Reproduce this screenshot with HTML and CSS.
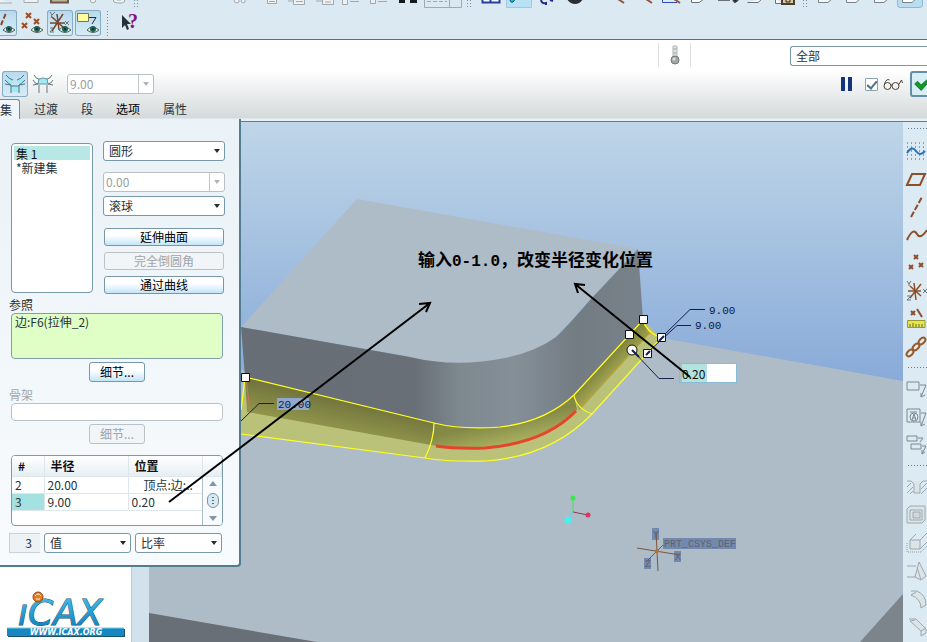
FILE: index.html
```html
<!DOCTYPE html>
<html lang="zh-CN">
<head>
<meta charset="utf-8">
<title>倒圆角</title>
<link rel="stylesheet" href="styles.css">
</head>
<body>
<header class="toolbar">
  <svg class="clipped-row" viewBox="0 0 927 9" preserveAspectRatio="xMinYMin slice" aria-hidden="true">
    <g fill="#eef1f2" stroke="#a1a9ae">
      <path d="M-3 -1V3H12M24 -1V2.500H38V-1"/>
      <path d="M51 -1V2.500H68V-1" fill="#bbb49a" stroke="#6b5a49" stroke-width="2"/>
      <path d="M90 -1Q90 3 93 3Q96 3 96 -1M113 -1Q113 3 117 3H122Q125 3 125 -1M117 0H121"/>
      <path d="M234 0Q234 3 237 3Q240 3 239 -1M241 -1Q241 3 243 3Q246 3 245 -1"/>
      <path d="M267.500 -1V3.500H276.500V-1M269 1.500H275M288 1H294M293.500 -1V4.500H304.500V-1M296 1.500H303"/>
      <path d="M316 1H322M322.500 -1V4.500H333.500V-1M325 2H331M342.500 -1V4.500H347.500V-1M350 1.500H359M370.500 -1V3.500H375.500V-1M378 1.500H387"/>
      <path d="M424.500 -1V7.500H461.500V-1M449.500 -1V7" fill="none"/><path d="M427 1.500H447" stroke-dasharray="4 2"/>
    </g>
    <path d="M399 -1V3H405V-1ZM410 -1V3H417V-1Z" fill="#14191c"/>
    <path d="M482.500 -1V2.500H499.500V-1M490.500 -1V2" fill="#fff" stroke="#243fa2" stroke-width="2"/>
    <path d="M506.500 -1V7.500H531.500V-1" fill="#b9e1f5" stroke="#a1c9dd"/>
    <path d="M510 -1Q510 3 513 2Q515 1 514 -1" fill="#21b6c6" stroke="#075469"/>
    <path d="M541 0Q542 4 546 3V5M550 0L553 1" fill="none" stroke="#232c84" stroke-width="2"/>
    <path d="M567 -1Q570 4 575 4Q580 4 583 -1Z" fill="#292f32"/>
    <path d="M618 -1L624 3M646 -1L652 3M674 -1L680 3" stroke="#90573a" stroke-width="2"/>
    <path d="M662.500 -1V2.500H677" fill="none" stroke="#314cac"/>
    <path d="M691.500 -1V2.500H699L704 -1M747.500 2.500H758L762 -1M775.500 -1V3.500H782" fill="#fff" stroke="#687177"/>
    <path d="M718 .5H730" stroke="#687177"/><path d="M733 0L735 2L738 0" stroke="#383f42" stroke-width="2"/>
    <path d="M782 -1V4H794V-1" fill="#d8ca9f" stroke="#4e3c31" stroke-width="2"/>
    <path d="M786 0V2H790V0" fill="none" stroke="#292520"/>
    <path d="M818.500 -1V2.500H828L832 -1M846.500 -1V2.500H856L860 -1M874.500 -1V2.500H884L888 -1" fill="#f5f8fa" stroke="#778389"/>
    <path d="M897.500 -1V5Q897.500 7.500 900 7.500H919Q922.500 7.500 922.500 5V-1" fill="#b9ddf1" stroke="#90b8d2"/>
    <path d="M902.500 -1V2.500H912L916 -1" fill="#fff" stroke="#778389"/>
    <path d="M134.500 0V8M137.500 0V8M467.500 0V8M470.500 0V8M803.500 0V8M806.500 0V8" stroke="#7693a4" stroke-dasharray="1 2"/>
  </svg>
  <div class="datum-row">
    <button class="icon-btn pressed edge" aria-label="显示轴"><svg viewBox="0 0 26 26"><path d="M10 15L15 3" stroke="#8d4a29" stroke-width="2" stroke-dasharray="5 2"/><use href="#eye"/></svg></button>
    <button class="icon-btn" aria-label="显示点"><svg viewBox="0 0 26 26"><path d="M7 3L12 8M12 3L7 8M3 13L8 18M8 13L3 18M15 9L20 14M20 9L15 14" stroke="#9a4d27" stroke-width="2"/><use href="#eye"/></svg></button>
    <button class="icon-btn pressed" aria-label="显示坐标系"><svg viewBox="0 0 26 26"><path d="M3 13H18M10 4L12 20M16 4L5 21M5 7L17 18" stroke="#75452e" stroke-width="1.500"/><path d="M3 2L5 5L8 2M5 5L4 8M18 11L22 15M22 11L18 15M3 18H6L3 22H7" fill="none" stroke="#66777f"/><use href="#eye"/></svg></button>
    <button class="icon-btn pressed" aria-label="显示注释"><svg viewBox="0 0 26 26"><path d="M2.500 3.500H13.500V11.500H2.500Z" fill="#fffb9f" stroke="#76794b"/><path d="M14 7.500H21L17 14" fill="none" stroke="#252b2e"/><use href="#eye"/></svg></button>
    <span class="grip-v"></span>
    <button class="icon-btn help" aria-label="帮助"><svg viewBox="0 0 26 26"><path d="M5 5V18L8 15L10 20L12 19L10 14H14Z" fill="#253139"/><text x="11" y="18" class="help-mark">?</text></svg></button>
  </div>
</header>

<svg class="defs" aria-hidden="true"><defs><g id="eye"><path d="M12 20Q17 14 24 20Q18 25 12 20Z" fill="#e0eeee" stroke="#52635c"/><circle cx="18" cy="19" r="3" fill="#235f55"/><circle cx="18" cy="19" r="1" fill="#082d28"/></g></defs></svg>

<section class="dashboard">
  <div class="message-row">
    <div class="thermo">
      <svg viewBox="0 0 12 20"><path d="M4 1H8V12H4Z" fill="#e0e2e2" stroke="#b5b8b8"/><path d="M4 4H8M4 8H8" stroke="#a8abab"/><circle cx="6" cy="15" r="4" fill="#a5a7a7" stroke="#737878"/><circle cx="5" cy="14" r="1.500" fill="#ddd"/></svg>
    </div>
    <select class="filter" aria-label="过滤器"><option>全部</option></select>
  </div>
  <div class="feature-row">
    <button class="icon-btn pressed round" aria-label="集模式"><svg viewBox="0 0 26 26"><path d="M5 6L11 10L9 13L5 11ZM21 6L15 10L17 13L21 11Z" fill="#9eebf3"/><path d="M9 15H17V21H9Z" fill="#9eebf3"/><path d="M4 4Q7 8 11 9M22 4Q19 8 15 9M3 9Q7 13 9 14V22M23 9Q19 13 17 14V22M3 13L9 14M23 13L17 14M9 15H17" fill="none" stroke="#4f7283"/></svg></button>
    <button class="icon-btn" aria-label="过渡模式"><svg viewBox="0 0 26 26"><path d="M9 8Q13 6 17 8L18 13H8Z" fill="#9eebf3" stroke="#68949d"/><path d="M4 4Q6 8 9 8M22 4Q20 8 17 8M3 9Q5 13 8 13M23 9Q21 13 18 13M3 14L8 13M23 14L18 13M9 14V22M17 14V22" fill="none" stroke="#66777f"/></svg></button>
    <span class="combo disabled radius"><select aria-label="半径" disabled><option>9.00</option></select></span>
    <div class="actions">
      <button class="pause" aria-label="暂停"></button>
      <label class="check"><input type="checkbox" checked aria-label="预览"><svg viewBox="0 0 20 14"><g fill="none" stroke="#514336"><circle cx="4" cy="9" r="3.500"/><circle cx="12" cy="9" r="3.500"/><path d="M1 7Q3 1 6 3M7.500 8H8.500M15 8L18 3L19 6"/></g></svg></label>
      <button class="accept" aria-label="确定"><svg viewBox="0 0 24 24"><path d="M3 12L6 9L10 13L19 5L20 8L10 19Z" fill="#15982a" stroke="#097119"/></svg></button>
    </div>
  </div>
  <nav class="tabs"><button class="tab active">集</button><button class="tab">过渡</button><button class="tab">段</button><button class="tab strong">选项</button><button class="tab">属性</button></nav>
</section>

<main class="workspace">
  <aside class="browser">
    <div class="logo">
      <svg viewBox="0 0 122 50" role="img" aria-label="iCAX">
        <defs><linearGradient id="blue" x2="0" y2="1"><stop stop-color="#4cc4ef"/><stop offset="1" stop-color="#0878b8"/></linearGradient></defs>
        <text x="14" y="34" class="logo-word">ıCAX</text>
        <circle cx="34" cy="6" r="5" fill="#e57d22" stroke="#8c4616"/><path d="M31 5Q34 1 37 5M32 8H36" stroke="#fff0cf" fill="none"/>
        <path d="M4 38H121V46H4Z" fill="#17536f"/><path d="M3 37H120V45H3Z" fill="#1687c0"/><path d="M3 37H120" stroke="#72cdec"/>
        <text x="62" y="44" class="logo-url" text-anchor="middle">WWW.ICAX.ORG</text>
      </svg>
    </div>
  </aside>

  <div class="viewport">
    <svg viewBox="149 122 754 520" preserveAspectRatio="xMinYMin slice" role="img" aria-label="模型">
      <defs>
        <linearGradient id="sky" gradientUnits="userSpaceOnUse" x1="0" y1="122" x2="0" y2="390"><stop stop-color="#bfd6e8"/><stop offset="1" stop-color="#87a9d8"/></linearGradient>
        <linearGradient id="side" gradientUnits="userSpaceOnUse" x1="241" y1="0" x2="645" y2="0"><stop stop-color="#686e75"/><stop offset=".43" stop-color="#696f76"/><stop offset=".54" stop-color="#7e888f"/><stop offset=".68" stop-color="#858f98"/><stop offset=".83" stop-color="#737c83"/><stop offset="1" stop-color="#78828a"/></linearGradient>
        <linearGradient id="olive" gradientUnits="userSpaceOnUse" x1="330" y1="394" x2="322" y2="432"><stop stop-color="#6e713c"/><stop offset="1" stop-color="#969b4c"/></linearGradient>
        <linearGradient id="olive-turn" gradientUnits="userSpaceOnUse" x1="500" y1="422" x2="506" y2="450"><stop stop-color="#848946"/><stop offset="1" stop-color="#b2b965"/></linearGradient>
        <linearGradient id="olive-end" gradientUnits="userSpaceOnUse" x1="604" y1="362" x2="618" y2="376"><stop stop-color="#80853e"/><stop offset="1" stop-color="#aaae58"/></linearGradient>
      </defs>
      <path d="M149 122H903V642H149Z" fill="url(#sky)"/>
      <path d="M149 370H246L640 334L903 381V642H149Z" fill="#aebcc7"/>
      <path d="M149 613L317 642H149Z" fill="#696f76"/>
      <path d="M903 594V642H860Z" fill="#7b858b"/>
      <path d="M241 327L357 199L638 249L590 300L553 340Q530 353 500 358Q448 368 410 357Z" fill="#aebcc7"/>
      <path d="M241 327L410 357Q456 368 505 358Q535 352 556 337Q566 328 590 300L638 249L643 320L574 395Q545 422 500 427Q462 430 434 423L245 377Z" fill="url(#side)"/>
      <path d="M245 377L434 423Q462 430 500 427Q545 422 574 395L643 320L661 338L592 414Q550 457 485 461Q450 462 425 458L241 434V410Z" fill="#bac27a"/>
      <path d="M245 377L434 423L431 445L247 412Z" fill="url(#olive)"/>
      <path d="M434 423Q462 430 500 427Q545 422 574 395L577 410Q540 443 485 448Q455 450 431 445Z" fill="url(#olive-turn)"/>
      <path d="M574 395L643 320L650 333L579 411Z" fill="url(#olive-end)"/>
      <path d="M581 406L650 333L646 331L661 338" fill="none" stroke="#c5a02d"/>
      <path d="M246 378L250 411" stroke="#c7795e"/>
      <g fill="none" stroke="#ffff20" stroke-width="1.200"><path d="M245 377L434 423Q462 430 500 427Q545 422 574 395L643 320Q646 332 661 338L592 414Q550 457 485 461Q450 462 425 458L241 434M245 378L241 410M434 423Q434 440 425 458M574 395Q576 408 592 414"/></g>
      <path d="M436 446Q455 449 485 448Q545 443 576 411" fill="none" stroke="#e6442c" stroke-width="3"/>
      <g fill="none" stroke="#161c4c"><path d="M241 421L259 403.500H274M661 338L690 309.500H705M648 352L677 325.500H691M634 352L659 378.500H674"/></g>
      <path d="M277 398H309V410H277Z" fill="#91a8cc"/>
      <g class="dimension"><text x="278" y="408">20.00</text><text x="709" y="314">9.00</text><text x="695" y="329">9.00</text></g>
      <g fill="#fff" stroke="#111"><path d="M241.500 373.500H249.500V381.500H241.500ZM639.500 315.500H647.500V323.500H639.500ZM625.500 330.500H633.500V338.500H625.500ZM657.500 333.500H665.500V341.500H657.500ZM643.500 349.500H651.500V357.500H643.500Z"/><circle cx="632" cy="350" r="5"/></g>
      <path d="M632 350L639 357M659 341L664 336M646 355L650 351" stroke="#161c4c" stroke-width="2"/>
      <path d="M573 512V499" stroke="#47dd5c"/><path d="M573 512L588 515" stroke="#9b3550"/><path d="M573 512L568 519" stroke="#49dce5"/>
      <circle cx="573" cy="498" r="2.500" fill="#36e94e"/><circle cx="588" cy="515" r="2.500" fill="#dc3659"/><circle cx="568" cy="520" r="3.500" fill="#45f1f3"/>
      <path d="M652 528H659V540H652ZM674 551H681V562H674ZM644 558H651V569H644ZM663 538H736V549H663Z" fill="#7189af"/>
      <path d="M637 548L680 555M656 532L658 571M646 562L663 545" stroke="#7d563b"/><circle cx="657" cy="551" r="2" fill="#b5702f"/>
      <g class="csys"><text x="664" y="547">PRT_CSYS_DEF</text><text x="653" y="538">Y</text><text x="675" y="560">X</text><text x="645" y="567">Z</text></g>
    </svg>
    <input class="ratio-input" aria-label="比率" value="0.20">
  </div>

  <aside class="feature-bar">
    <span class="grip-h"></span>
    <button aria-label="草绘"><svg viewBox="0 0 24 24"><path d="M4 4H24M4 8H24M4 12H24M4 16H24M4 20H24" stroke="#3b5774" stroke-dasharray="1 3"/><path d="M4 14Q9 6 13 12T22 12" fill="none" stroke="#2874bc" stroke-width="2"/></svg></button>
    <button aria-label="平面"><svg viewBox="0 0 24 24"><path d="M4 18L9 7H22L17 18Z" class="brown"/></svg></button>
    <button aria-label="轴"><svg viewBox="0 0 24 24"><path d="M8 22L19 2" class="brown" stroke-dasharray="6 2"/></svg></button>
    <button aria-label="曲线"><svg viewBox="0 0 24 24"><path d="M4 17Q10 4 14 11Q17 17 24 7" class="brown"/></svg></button>
    <button aria-label="点"><svg viewBox="0 0 24 24"><path d="M11 4L15 8M15 4L11 8M6 14L10 18M10 14L6 18M16 12L20 16M20 12L16 16" class="brown"/></svg></button>
    <button aria-label="坐标系"><svg viewBox="0 0 24 24"><path d="M5 12H18M11 4L13 21M18 5L7 19M7 7L18 17" class="brown mid"/><path d="M4 2L6 5L8 2M6 5V7M20 10L24 14M24 10L20 14M4 17H8L4 21H8" fill="none" stroke="#66737a"/></svg></button>
    <button aria-label="分析"><svg viewBox="0 0 24 24"><path d="M8 4L12 8M12 4L8 8M14 2L19 10" class="brown"/><path d="M4.500 13.500H22V20.500H4.500Z" fill="#e6e44f" stroke="#999833"/><path d="M7 20V17M10 20V16M13 20V17M16 20V17M19 20V17" stroke="#6a6934"/></svg></button>
    <button aria-label="参照"><svg viewBox="0 0 24 24"><g fill="none" stroke="#985a2c" stroke-width="2"><ellipse cx="7" cy="18" rx="4" ry="2.500" transform="rotate(-45 7 18)"/><ellipse cx="13" cy="12" rx="4" ry="2.500" transform="rotate(-45 13 12)"/><ellipse cx="19" cy="6" rx="4" ry="2.500" transform="rotate(-45 19 6)"/></g></svg></button>
    <span class="grip-h"></span>
    <button aria-label="注释"><svg viewBox="0 0 24 24"><path d="M4 5H16V13H4ZM17 8H23L18 20M18 16V20L22 18" class="gray"/></svg></button>
    <button aria-label="注释特征"><svg viewBox="0 0 24 24"><path d="M4 4H17V17H4ZM18 8H23L18 21M18 17V21L22 19M7 7H14" class="gray"/><circle cx="11" cy="12" r="4" class="gray"/><path d="M9 15L11 9L13 15M10 13H12" class="gray"/></svg></button>
    <button aria-label="传播"><svg viewBox="0 0 24 24"><path d="M4 3H14V8H4ZM8 11H18V16H8ZM15 5H20L17 9M19 13H23L19 21M19 17V21L22 19" class="gray"/></svg></button>
    <span class="grip-h"></span>
    <button aria-label="孔"><svg viewBox="0 0 24 24"><path d="M4 6H8L11 9V18H17V9L20 6H24" class="pale"/><path d="M4 12L8 8M4 18L10 12M7 19L10 16M18 14L24 8M18 19L24 13" class="pale"/></svg></button>
    <button aria-label="壳"><svg viewBox="0 0 24 24"><path d="M4 6L7 3H22V17L19 20H4ZM7 7H19V17H7Z" class="pale"/><path d="M10 9H17V15H10Z" fill="#d3d8da" stroke="#a1aaae"/></svg></button>
    <button aria-label="筋"><svg viewBox="0 0 24 24"><path d="M7 9H17V18H7ZM7 9L13 3M17 9L24 2M17 18L24 11" class="pale"/><path d="M4 12V21H18L24 15" fill="none" stroke="#929da3" stroke-dasharray="1 1"/></svg></button>
    <button aria-label="拔模"><svg viewBox="0 0 24 24"><path d="M4 7H13M4 18H12L16 3L23 17L18 21L12 18M18 21L14 8" class="pale"/></svg></button>
    <button aria-label="倒圆角"><svg viewBox="0 0 24 24"><path d="M8 4H14Q23 8 23 18L18 21Q18 12 8 8L13 5" class="pale"/></svg></button>
    <button aria-label="倒角"><svg viewBox="0 0 24 24"><path d="M6 4H13L23 14V18L18 21V16L7 6L12 5M18 16L23 13" class="pale"/></svg></button>
  </aside>

  <form class="panel">
    <div class="set-row">
      <select class="set-list" size="8" aria-label="集"><option selected>集 1</option><option>*新建集</option></select>
      <div class="shape-col">
        <span class="combo"><select aria-label="截面形状"><option>圆形</option></select></span>
        <span class="combo disabled conic"><select aria-label="圆锥参数" disabled><option>0.00</option></select></span>
        <span class="combo"><select aria-label="创建方法"><option>滚球</option></select></span>
        <div class="push-group">
          <button type="button" class="push">延伸曲面</button>
          <button type="button" class="push" disabled>完全倒圆角</button>
          <button type="button" class="push">通过曲线</button>
        </div>
      </div>
    </div>
    <label for="refs">参照</label>
    <textarea id="refs" class="refs">边:F6(拉伸_2)</textarea>
    <button type="button" class="push detail">细节...</button>
    <label for="spine" class="muted">骨架</label>
    <input id="spine" class="spine" disabled>
    <button type="button" class="push detail" disabled>细节...</button>
    <div class="radius-box">
      <table>
        <thead><tr><th class="num">#</th><th class="rad">半径</th><th>位置</th><th class="scroll-head"></th></tr></thead>
        <tbody>
          <tr><td>2</td><td>20.00</td><td class="vertex">顶点:边:..</td></tr>
          <tr><td class="current">3</td><td>9.00</td><td>0.20</td></tr>
        </tbody>
      </table>
      <div class="scroller" aria-hidden="true"><i class="up"></i><i class="thumb"></i><i class="down"></i></div>
    </div>
    <div class="value-row">
      <output>3</output>
      <span class="combo"><select aria-label="半径类型"><option>值</option></select></span>
      <span class="combo"><select aria-label="位置类型"><option>比率</option></select></span>
    </div>
  </form>

  <svg class="annotation" viewBox="0 122 927 520" preserveAspectRatio="xMinYMin slice">
    <g fill="none" stroke="#000" stroke-width="2"><path d="M169 502L430 303M419 304L430 303L426 312M690 377L575 284M585 285L575 284L578 293"/></g>
    <text x="418" y="266" class="note">输入<tspan class="note-num">0-1.0</tspan>，改变半径变化位置</text>
  </svg>
</main>
</body>
</html>
```
FILE: styles.css
```css
* { box-sizing: border-box; }
body {
  margin: 0; height: 100vh; overflow: hidden;
  display: flex; flex-direction: column;
  font: 12px/14px "Noto Sans CJK SC", sans-serif;
  color: #27343b; background: #dbe9f2;
}
button, input, select, textarea { font: inherit; color: inherit; margin: 0; padding: 0; border-radius: 3px; }
button { border: 0; background: none; }
svg { display: block; }
.defs { position: absolute; width: 0; height: 0; }

.toolbar { flex: none; height: 40px; overflow: hidden; background: #dbe9f2; border-bottom: 1px solid #4d7385; }
.clipped-row { width: 100%; height: 9px; }
.datum-row { display: flex; align-items: center; gap: 2px; margin-top: 1px; }
.icon-btn { flex: none; width: 26px; height: 26px; }
.icon-btn svg { width: 100%; height: 100%; fill: none; }
.pressed { background: linear-gradient(#b7d9ed, #d8edf7); box-shadow: inset 0 0 0 1px #86acc3; }
.edge { margin-left: -9px; }
.grip-v { width: 4px; height: 26px; margin: 0 3px; background: radial-gradient(circle, #6f8b9b 1px, transparent 1px) 0 0 / 3px 3px; }
.help { margin-left: 2px; }
.help-mark { font: bold 20px "Liberation Serif", serif; fill: #84137b; }

.dashboard { flex: none; height: 82px; display: flex; flex-direction: column; background: linear-gradient(#fff 30px, #d4dadb 78px, #e6f1f6 79px); border-bottom: 1px solid #5d7d90; }
.message-row { height: 30px; display: flex; justify-content: flex-end; }
.thermo { width: 33px; height: 24px; margin: 3px 99px 0 0; border: solid #dedede; border-width: 0 1px; display: flex; justify-content: center; align-items: center; }
.thermo svg { width: 12px; height: 20px; }
.filter { width: 137px; height: 20px; margin-top: 6px; padding-left: 5px; appearance: none; background: #fff; border: 1px solid #7898a7; border-right: 0; border-radius: 3px 0 0 3px; }
.feature-row { height: 28px; display: flex; align-items: center; gap: 4px; padding-left: 2px; }
.feature-row .icon-btn + .icon-btn { margin-left: -2px; }
.round { border-radius: 3px; }
.feature-row .radius { width: 87px; margin-left: 7px; }
.actions { margin-left: auto; display: flex; align-items: center; }
.pause { width: 11px; height: 14px; border: solid #12357e; border-width: 0 4px; border-radius: 0; margin-right: 13px; }
.check { display: flex; align-items: center; gap: 5px; margin-right: 6px; }
.check input { appearance: none; width: 13px; height: 13px; border: 1px solid #88a4b2; border-radius: 1px; background: #fff; display: grid; place-items: center; }
.check input::before { content: ""; width: 4px; height: 8px; border: solid #526f86; border-width: 0 2px 2px 0; transform: rotate(40deg); }
.check svg { width: 21px; height: 14px; }
.accept { width: 17px; height: 26px; overflow: hidden; border: 2px solid #658da6; border-right: 0; border-radius: 3px 0 0 3px; background: #d8eef7; }
.accept svg { width: 22px; height: 22px; }
.tabs { height: 20px; margin-top: 1px; display: flex; gap: 1px; }
.tab { height: 20px; padding: 0 11px; }
.active { padding: 0 7px 0 0; margin-right: 2px; background: #eff5f9; border: solid #778b97; border-width: 1px 1px 0 0; border-radius: 0 3px 0 0; }
.strong { color: #000; }

.workspace { flex: 1; min-height: 0; position: relative; display: flex; }
.browser { flex: none; width: 149px; padding-right: 18px; display: flex; align-items: flex-end; background: linear-gradient(90deg, #fff 131px, #9eb7c5 131px, #d2e2ec 132px); }
.logo { width: 122px; margin: 0 0 1px 4px; }
.logo svg { width: 100%; height: 50px; }
.logo-word { font: italic 36px "DejaVu Sans", sans-serif; fill: url(#blue); stroke: #16506f; stroke-width: 1px; paint-order: stroke; }
.logo-url { font: bold italic 8px "DejaVu Sans", sans-serif; fill: #fff; }
.viewport { flex: 1; min-width: 0; position: relative; overflow: hidden; background: #aebcc7; }
.viewport > svg { width: 100%; height: 100%; }
.dimension { font: 11px "Liberation Mono", monospace; fill: #11193f; }
.csys { font: 10px "Liberation Mono", monospace; fill: #68616a; }
.ratio-input { position: absolute; left: 530px; top: 241px; width: 58px; height: 20px; padding-left: 2px; color: #111; border: 1px solid #8abbd4; border-radius: 0; background: linear-gradient(90deg, #b2e3df 25px, #fff 25px) content-box #fff; }

.feature-bar { flex: none; width: 24px; overflow: hidden; display: flex; flex-direction: column; background: #dbeaf3; }
.feature-bar button { flex: none; height: 28px; width: 24px; }
.feature-bar svg { width: 24px; height: 24px; }
.grip-h { flex: none; height: 4px; margin: 5px 0 5px 4px; background: radial-gradient(circle, #607f92 1px, transparent 1px) 0 0 / 3px 3px; }
.grip-h:first-child { margin-bottom: 6px; }
.brown { fill: none; stroke: #8f4e2b; stroke-width: 2; }
.mid { stroke-width: 1.5; }
.gray { fill: none; stroke: #7d898f; }
.pale { fill: #dde4e7; stroke: #9ba8af; }

.panel { position: absolute; top: -3px; left: 0; width: 241px; padding: 22px 16px 12px 11px; display: flex; flex-direction: column; background: linear-gradient(#eaf2f7, #f8fbfd); border: solid #557b91; border-width: 0 2px 2px 0; border-radius: 0 0 4px 0; }
.set-row { display: flex; gap: 10px; }
.set-list { width: 82px; height: 150px; margin-top: 2px; padding: 2px; overflow: hidden; border: 1px solid #7698a8; border-radius: 4px; background: #fff; }
.set-list option { display: flex; align-items: center; height: 14px; min-height: 14px; padding: 0 2px; line-height: 14px; }
.set-list option:checked { background: linear-gradient(#b8e8e6, #b8e8e6); color: #111; }
.shape-col { flex: 1; margin-right: -2px; display: flex; flex-direction: column; gap: 4px; }
.conic { margin-top: 7px; }
.combo { position: relative; display: flex; }
.combo select { appearance: none; width: 100%; height: 20px; padding-left: 5px; border: 1px solid #7698a8; background: #fff; }
.combo::after { content: ""; position: absolute; right: 5px; top: 8px; border: solid transparent; border-width: 4px 3px 0; border-top-color: #222d33; }
.combo.disabled select { color: #999fa2; border-color: #b9bfc2; opacity: 1; padding-left: 2px; }
.combo.disabled::after { border-top-color: #afb4b7; }
.combo.disabled::before { content: ""; position: absolute; right: 15px; top: 1px; height: 18px; border-left: 1px solid #c1c7ca; }
.push-group { display: flex; flex-direction: column; gap: 6px; margin: 8px 1px 0; }
.push { height: 18px; line-height: 14px; color: #000; border: 1px solid #7698aa; background: linear-gradient(#fff 40%, #c4e5f7); }
.push:disabled { color: #9ea4a7; border-color: #bbc1c5; background: #f1f5f8; }
.panel label { margin: 4px 0 1px -2px; }
.panel .muted { color: #a1a7aa; margin-top: 6px; }
.refs { height: 46px; padding: 1px 3px; resize: none; border: 1px solid #829eaa; border-radius: 4px; background: #e0ffc7; }
.panel .detail { align-self: center; width: 56px; height: 20px; margin-top: 3px; }
.spine { height: 18px; border: 1px solid #bac3c7; border-radius: 4px; background: #fff; }
.radius-box { position: relative; height: 71px; margin: 11px 0 0; overflow: hidden; border: 1px solid #7c9ba9; border-radius: 4px; background: #fff; }
table { width: 100%; table-layout: fixed; border-collapse: collapse; }
th, td { padding: 0 3px; text-align: left; height: 17px; line-height: 16px; border: solid #dce7eb; border-width: 0 1px 1px 0; white-space: nowrap; }
th { height: 20px; padding: 0 6px; color: #111; background: linear-gradient(#fff, #e6eef3); }
.num { width: 32px; }
.rad { width: 84px; }
.scroll-head { width: 19px; }
.vertex { padding-left: 15px; }
.current { background: #a4e1e1; }
.scroller { position: absolute; top: 21px; right: 0; bottom: 0; width: 20px; display: flex; flex-direction: column; align-items: center; justify-content: space-around; background: #f8fbfd; border-left: 1px solid #aebfca; }
.up, .down { border: solid transparent; border-width: 0 4px 5px; border-bottom-color: #7e98a8; }
.down { border-width: 5px 4px 0; border-top-color: #7e98a8; }
.thumb { width: 12px; height: 15px; border: 1px solid #7598a9; border-radius: 6px; background: repeating-linear-gradient(#527083 0 1px, transparent 1px 3px) center / 2px 7px no-repeat, #d8e9f2; }
.value-row { display: grid; grid-template-columns: 31px 87px 87px; gap: 0 4px; margin: 7px 0 0 -2px; }
output { height: 20px; padding: 2px 8px; text-align: right; background: #edf2f5; border: solid #c9d1d6; border-width: 1px 0 1px 1px; }

.annotation { position: absolute; inset: 0; width: 100%; height: 100%; pointer-events: none; }
.note { font: bold 17px "Noto Sans CJK SC", sans-serif; fill: #000; }
.note-num { font: bold 16px "Liberation Mono", monospace; }
```
